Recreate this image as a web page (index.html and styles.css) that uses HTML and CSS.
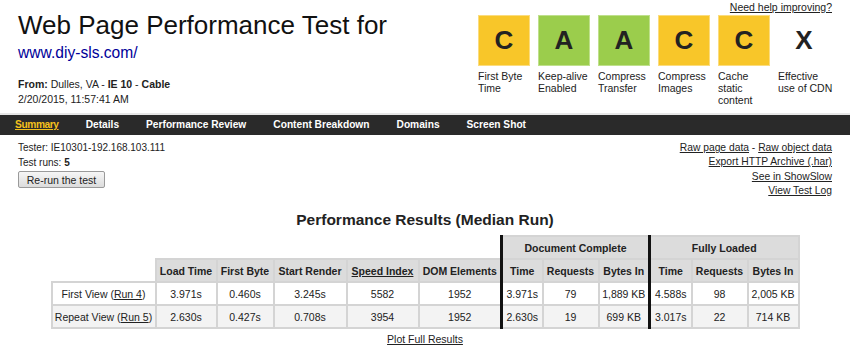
FILE: index.html
```html
<!DOCTYPE html>
<html lang="en">
<head>
    <meta charset="UTF-8">
    <title>WebPagetest Test Result - www.diy-sls.com/</title>
    <link rel="stylesheet" href="styles.css">
</head>
<body>
    <div class="header">
        <div class="test-info">
            <h1 class="page-title">Web Page Performance Test for</h1>
            <a class="test-url" href="#">www.diy-sls.com/</a>
            <div class="test-from">
                <b>From:</b> Dulles, VA - <b>IE 10</b> - <b>Cable</b><br>
                2/20/2015, 11:57:41 AM
            </div>
        </div>
        <div class="grades-block">
            <a class="help-link" href="#">Need help improving?</a>
            <div class="grades">
                <div class="grade">
                    <div class="grade-box grade-c">C</div>
                    <div class="grade-label">First Byte<br>Time</div>
                </div>
                <div class="grade">
                    <div class="grade-box grade-a">A</div>
                    <div class="grade-label">Keep-alive<br>Enabled</div>
                </div>
                <div class="grade">
                    <div class="grade-box grade-a">A</div>
                    <div class="grade-label">Compress<br>Transfer</div>
                </div>
                <div class="grade">
                    <div class="grade-box grade-c">C</div>
                    <div class="grade-label">Compress<br>Images</div>
                </div>
                <div class="grade">
                    <div class="grade-box grade-c">C</div>
                    <div class="grade-label">Cache<br>static<br>content</div>
                </div>
                <div class="grade">
                    <div class="grade-box">X</div>
                    <div class="grade-label">Effective<br>use of CDN</div>
                </div>
            </div>
        </div>
    </div>

    <!-- tabs -->
    <div class="nav-bar">
        <a class="nav-item active" href="#">Summary</a>
        <a class="nav-item" href="#">Details</a>
        <a class="nav-item" href="#">Performance Review</a>
        <a class="nav-item" href="#">Content Breakdown</a>
        <a class="nav-item" href="#">Domains</a>
        <a class="nav-item" href="#">Screen Shot</a>
    </div>

    <div class="run-info">
        <div class="tester">
            <div>Tester: IE10301-192.168.103.111</div>
            <div>Test runs: <b>5</b></div>
            <button class="rerun-button">Re-run the test</button>
        </div>
        <div class="export-links">
            <div><a href="#">Raw page data</a> - <a href="#">Raw object data</a></div>
            <div><a href="#">Export HTTP Archive (.har)</a></div>
            <div><a href="#">See in ShowSlow</a></div>
            <div><a href="#">View Test Log</a></div>
        </div>
    </div>

    <h2 class="results-title">Performance Results (Median Run)</h2>

    <table class="results">
        <colgroup>
            <col style="width: 104px">
            <col style="width: 61px">
            <col style="width: 57px">
            <col style="width: 73px">
            <col style="width: 72px">
            <col style="width: 83px">
            <col style="width: 41px">
            <col style="width: 56px">
            <col style="width: 51px">
            <col style="width: 42px">
            <col style="width: 56px">
            <col style="width: 51px">
        </colgroup>
        <tr>
            <th class="empty" colspan="6"></th>
            <th class="group" colspan="3">Document Complete</th>
            <th class="group" colspan="3">Fully Loaded</th>
        </tr>
        <tr>
            <th class="empty"></th>
            <th>Load Time</th>
            <th>First Byte</th>
            <th>Start Render</th>
            <th><a href="#">Speed Index</a></th>
            <th>DOM Elements</th>
            <th class="divider">Time</th>
            <th>Requests</th>
            <th>Bytes In</th>
            <th class="divider">Time</th>
            <th>Requests</th>
            <th>Bytes In</th>
        </tr>
        <tr>
            <td>First View (<a href="#">Run 4</a>)</td>
            <td>3.971s</td>
            <td>0.460s</td>
            <td>3.245s</td>
            <td>5582</td>
            <td>1952</td>
            <td class="divider">3.971s</td>
            <td>79</td>
            <td>1,889 KB</td>
            <td class="divider">4.588s</td>
            <td>98</td>
            <td>2,005 KB</td>
        </tr>
        <tr class="alt">
            <td>Repeat View (<a href="#">Run 5</a>)</td>
            <td>2.630s</td>
            <td>0.427s</td>
            <td>0.708s</td>
            <td>3954</td>
            <td>1952</td>
            <td class="divider">2.630s</td>
            <td>19</td>
            <td>699 KB</td>
            <td class="divider">3.017s</td>
            <td>22</td>
            <td>714 KB</td>
        </tr>
    </table>

    <div class="plot-link"><a href="#">Plot Full Results</a></div>
</body>
</html>
```

FILE: styles.css
```css
* {
    margin: 0;
    padding: 0;
    box-sizing: border-box;
}
body {
    font-family: 'Liberation Sans', Arial, sans-serif;
    font-size: 10.5px;
    color: #222;
    background: #fff;
}
a {
    color: #222;
}
.header {
    display: flex;
    justify-content: space-between;
    padding: 0 18px;
    height: 113px;
}
.test-info {
    padding-top: 10px;
}
.page-title {
    font-size: 26px;
    font-weight: normal;
    line-height: 30px;
    color: #111;
}
.test-url {
    display: block;
    margin-top: 4px;
    font-size: 15.6px;
    line-height: 18px;
    color: #000099;
    text-decoration: none;
}
.test-from {
    margin-top: 15px;
    line-height: 14.5px;
}
.grades-block {
    display: flex;
    flex-direction: column;
    align-items: flex-end;
    width: 354px;
}
.help-link {
    line-height: 14px;
}
.grades {
    display: flex;
    gap: 8px;
    margin-top: 1px;
    width: 100%;
}
.grade {
    width: 52px;
}
.grade-box {
    height: 51px;
    display: flex;
    align-items: center;
    justify-content: center;
    font-size: 26px;
    font-weight: bold;
    color: #222;
    border: 1px solid transparent;
}
.grade-a {
    background: #9bcd4c;
    border-color: #bfe08c;
}
.grade-c {
    background: #f8c629;
    border-color: #fbdc7e;
}
.grade-label {
    margin-top: 4px;
    line-height: 12px;
    white-space: nowrap;
}
.nav-bar {
    display: flex;
    gap: 27px;
    padding: 0 15px;
    height: 22px;
    background: #2a2a2a;
    border-top: 2px solid #e6e6e6;
}
.nav-item {
    color: #fff;
    font-size: 10.2px;
    font-weight: bold;
    line-height: 20px;
    text-decoration: none;
}
.nav-item.active {
    color: #f5c11d;
    letter-spacing: -0.4px;
    text-decoration: underline;
}
.run-info {
    display: flex;
    justify-content: space-between;
    padding: 5px 18px 0;
}
.tester {
    font-size: 10px;
    line-height: 15px;
}
.rerun-button {
    display: block;
    margin-top: 1px;
    width: 87px;
    height: 17px;
    font-family: inherit;
    font-size: 10.5px;
    color: #222;
    background: linear-gradient(#f6f6f6, #dcdcdc);
    border: 1px solid #9a9a9a;
    border-radius: 2px;
}
.export-links {
    padding-top: 1px;
    text-align: right;
    font-size: 10.3px;
    line-height: 14.3px;
}
.results-title {
    margin-top: 12px;
    text-align: center;
    font-size: 15.5px;
    line-height: 20px;
}
.results {
    margin: 5px auto 0;
    table-layout: fixed;
    border-collapse: collapse;
}
.results th,
.results td {
    height: 23px;
    padding: 0;
    text-align: center;
    white-space: nowrap;
    border: 2px solid #d4d4d4;
}
.results th {
    background: #dcdcdc;
}
.results th.empty {
    background: none;
    border: none;
}
.results td {
    background: #fff;
}
.results tr.alt td {
    background: #f3f3f3;
}
.results .group,
.results .divider {
    border-left: 3px solid #111;
}
.plot-link {
    margin-top: 2px;
    text-align: center;
    line-height: 16px;
}
```
